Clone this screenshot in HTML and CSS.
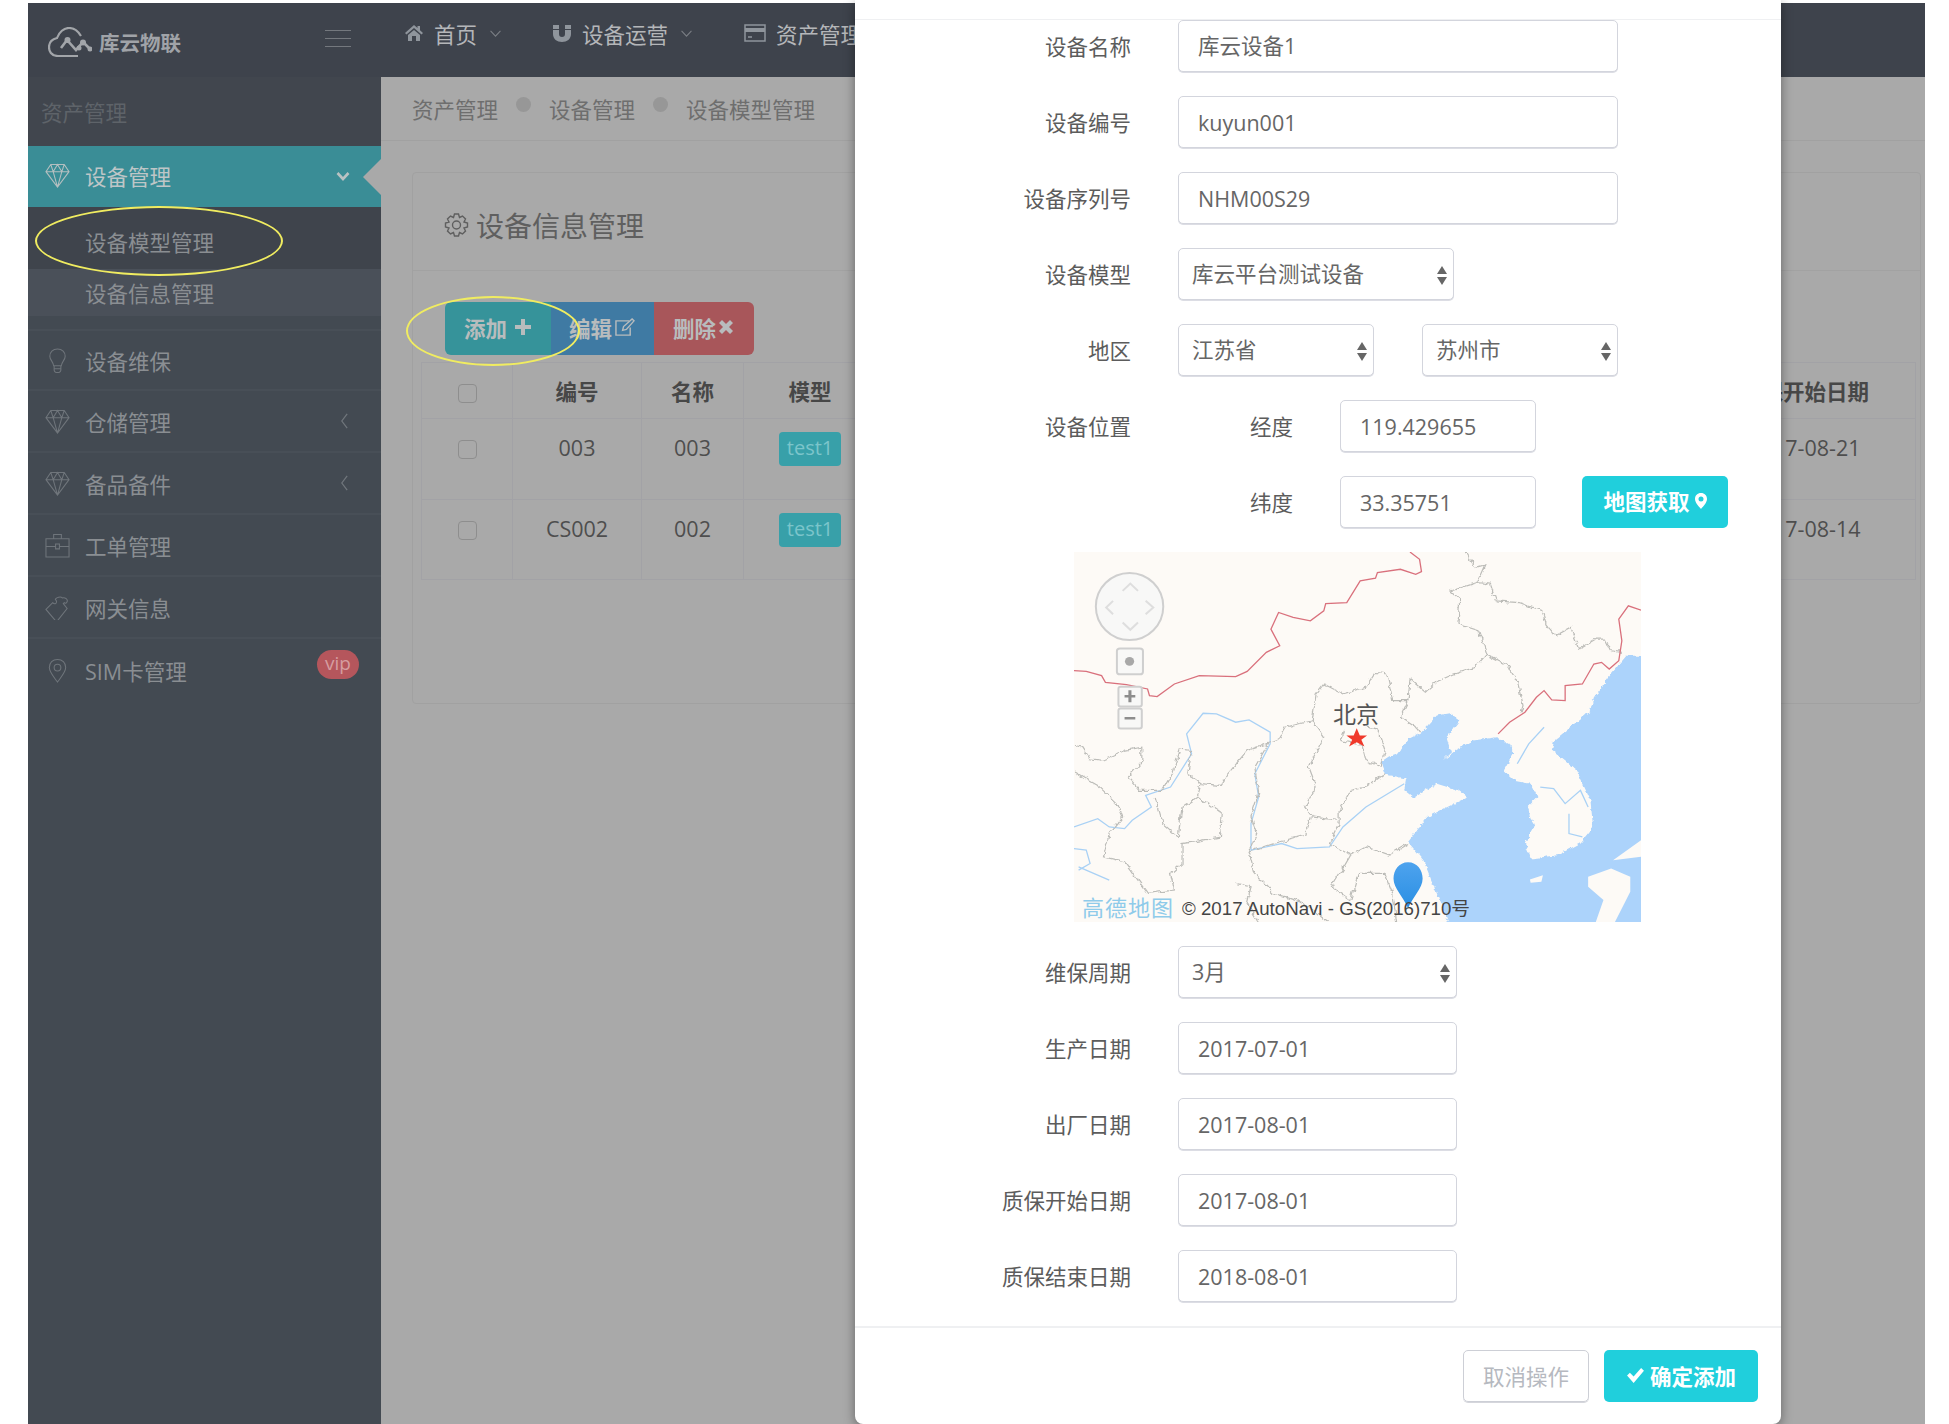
FILE: index.html
```html
<!DOCTYPE html>
<html lang="zh-CN">
<head>
<meta charset="utf-8">
<title>设备信息管理</title>
<link rel="stylesheet" href="styles.css">
</head>
<body>
<svg class="defs" width="0" height="0" aria-hidden="true">
  <symbol id="i-diamond" viewBox="0 0 26 26"><path d="M6 1.500H20L25 9 13 25 1 9ZM1 9H25M8.500 9 13 25 17.500 9M6 1.500 8.500 9 13 1.500 17.500 9 20 1.500"/></symbol>
  <symbol id="i-bulb" viewBox="0 0 20 26"><path d="M10 1C5 1 2 4.500 2 8.500c0 4 3.500 5.500 4 10h8c.5-4.500 4-6 4-10C18 4.500 15 1 10 1ZM6.500 18.500v4c0 2 1.500 3 3.500 3s3.500-1 3.500-3v-4M6.500 21.500h7"/></symbol>
  <symbol id="i-case" viewBox="0 0 26 26"><path d="M1 6H25V25H1ZM9 6V1.500H17V6M1 14H11M15 14H25M11 11.500H15V16.500H11Z"/></symbol>
  <symbol id="i-hand" viewBox="0 0 26 26"><path d="M1 15 8 8c2 2 4 1 4-1s-2-2-1-3 5-3 7-1c3-1 6 2 5 4-1 2-2 2-3 1l-1 1 4 5-11 14Z"/></symbol>
  <symbol id="i-pin" viewBox="0 0 20 26"><path d="M10 1.500C5 1.500 1.500 5 1.500 10c0 5 5 10 8.500 15 3.500-5 8.500-10 8.500-15 0-5-3.500-8.500-8.500-8.500Z"/><circle cx="10" cy="10" r="3.500"/></symbol>
  <symbol id="i-chev-d" viewBox="0 0 14 10"><path d="M1.500 2 7 8l5.500-6"/></symbol>
</svg>

<div class="app">
  <header class="topbar">
    <div class="brand">
      <svg class="logo" viewBox="0 0 44 30"><path d="M30 29H10C3 29 1 24 1 20 1 15 5 12 9 11 11 5 16 1 21 1 26 1 30 4 33 9"/><path class="logo-pulse" d="M13 21 19 13 28 23 35 15 42 22"/><circle cx="19.500" cy="13" r="3"/><circle cx="35" cy="15.500" r="3"/><circle cx="31" cy="21" r="2.500"/><circle cx="42" cy="22" r="2.500"/></svg>
      <span class="brand-name">库云物联</span>
      <span class="burger"><i></i><i></i><i></i></span>
    </div>
    <nav class="nav">
      <a class="nav-item">
        <svg class="nav-ico" viewBox="0 0 18 18"><path class="solid" d="M9 1 0 9l1.500 1.500L9 4l7.500 6.500L18 9l-3-2.700V2h-2.500v2ZM3 11l6-5 6 5v6h-4v-5H7v5H3Z"/></svg>
        <span>首页</span>
        <svg class="nav-chev" viewBox="0 0 14 10"><use href="#i-chev-d"/></svg>
      </a>
      <a class="nav-item">
        <svg class="nav-ico" viewBox="0 0 18 18"><path class="solid" d="M0 1h6v4H0ZM12 1h6v4h-6ZM0 6h6v4c0 2 1 3 3 3s3-1 3-3V6h6v4c0 5-4 8-9 8s-9-3-9-8Z"/></svg>
        <span>设备运营</span>
        <svg class="nav-chev" viewBox="0 0 14 10"><use href="#i-chev-d"/></svg>
      </a>
      <a class="nav-item">
        <svg class="nav-ico wide" viewBox="0 0 22 18"><path class="line" d="M1 1h20v16H1ZM4 13h4"/><path class="solid" d="M1 4h20v4H1Z"/></svg>
        <span>资产管理</span>
      </a>
    </nav>
  </header>

  <aside class="sidebar">
    <div class="side-title">资产管理</div>
    <a class="side-item active">
      <svg class="side-ico"><use href="#i-diamond"/></svg>
      <span>设备管理</span>
      <svg class="side-chev-d" viewBox="0 0 14 10"><use href="#i-chev-d"/></svg>
    </a>
    <a class="sub-item">设备模型管理</a>
    <a class="sub-item current">设备信息管理</a>
    <a class="side-item first">
      <svg class="side-ico"><use href="#i-bulb"/></svg>
      <span>设备维保</span>
    </a>
    <a class="side-item">
      <svg class="side-ico"><use href="#i-diamond"/></svg>
      <span>仓储管理</span>
      <svg class="side-chev-l" viewBox="0 0 10 18"><path d="M8 1 2 9l6 8"/></svg>
    </a>
    <a class="side-item">
      <svg class="side-ico"><use href="#i-diamond"/></svg>
      <span>备品备件</span>
      <svg class="side-chev-l" viewBox="0 0 10 18"><path d="M8 1 2 9l6 8"/></svg>
    </a>
    <a class="side-item">
      <svg class="side-ico"><use href="#i-case"/></svg>
      <span>工单管理</span>
    </a>
    <a class="side-item">
      <svg class="side-ico"><use href="#i-hand"/></svg>
      <span>网关信息</span>
    </a>
    <a class="side-item last">
      <svg class="side-ico"><use href="#i-pin"/></svg>
      <span>SIM卡管理</span>
      <em class="vip">vip</em>
    </a>
  </aside>

  <main class="main">
    <div class="crumbs">
      <span>资产管理</span><i class="dot"></i>
      <span>设备管理</span><i class="dot"></i>
      <span>设备模型管理</span>
    </div>
    <div class="content">
      <section class="card">
        <h2 class="card-title">
          <svg class="gear" viewBox="0 0 24 24"><circle cx="12" cy="12" r="4"/><path d="M10 1h4l1 3.500 3-1.500 3 3-1.500 3 3.500 1v4l-3.500 1 1.500 3-3 3-3-1.500-1 3.500h-4l-1-3.500-3 1.500-3-3 1.500-3-3.500-1v-4l3.500-1-1.500-3 3-3 3 1.500Z"/></svg>
          设备信息管理
        </h2>
        <div class="card-body">
          <div class="toolbar">
            <a class="tbtn teal">添加<svg class="tb-ico plus" viewBox="0 0 18 18"><path d="M7 1h4v6h6v4h-6v6H7v-6H1V7h6Z"/></svg></a>
            <a class="tbtn blue">编辑<svg class="tb-ico edit" viewBox="0 0 22 20"><path d="M16 3H2v15h15V10"/><path d="M9 13l1-4 9-8 2 2-8 9Z"/></svg></a>
            <a class="tbtn red">删除<svg class="tb-ico times" viewBox="0 0 14 14"><path d="M3 0l4 4 4-4 3 3-4 4 4 4-3 3-4-4-4 4-3-3 4-4-4-4Z"/></svg></a>
          </div>
          <table class="grid">
            <thead>
              <tr>
                <th class="c-check"><span class="check"></span></th>
                <th class="c-code">编号</th>
                <th class="c-name">名称</th>
                <th class="c-model">模型</th>
                <th></th>
                <th class="c-date">质保开始日期</th>
              </tr>
            </thead>
            <tbody>
              <tr class="r1">
                <td><span class="check"></span></td>
                <td>003</td>
                <td>003</td>
                <td><span class="tag">test1</span></td>
                <td></td>
                <td>2017-08-21</td>
              </tr>
              <tr class="r2">
                <td><span class="check"></span></td>
                <td>CS002</td>
                <td>002</td>
                <td><span class="tag">test1</span></td>
                <td></td>
                <td>2017-08-14</td>
              </tr>
            </tbody>
          </table>
        </div>
      </section>
    </div>
  </main>
</div>

<span class="ring ring-a"></span>
<span class="ring ring-b"></span>

<div class="modal">
  <div class="modal-top"></div>
  <div class="form">
    <div class="row"><label>设备名称</label><div class="field w-full cjk">库云设备1</div></div>
    <div class="row"><label>设备编号</label><div class="field w-full">kuyun001</div></div>
    <div class="row"><label>设备序列号</label><div class="field w-full">NHM00S29</div></div>
    <div class="row"><label>设备模型</label><div class="field select w-mid">库云平台测试设备</div></div>
    <div class="row"><label>地区</label><div class="pair"><div class="field select w-half">江苏省</div><div class="field select w-half">苏州市</div></div></div>
    <div class="row"><label>设备位置</label><span class="sub-label">经度</span><div class="field w-coord">119.429655</div></div>
    <div class="row"><label></label><span class="sub-label">纬度</span><div class="field w-coord">33.35751</div>
      <a class="btn-map">地图获取<svg class="map-pin" viewBox="0 0 12 16"><path fill-rule="evenodd" d="M6 0C2.500 0 0 2.500 0 6c0 3.500 3.500 7 6 10 2.500-3 6-6.500 6-10 0-3.500-2.500-6-6-6Zm0 3.500a2.500 2.500 0 1 1 0 5 2.500 2.500 0 0 1 0-5Z"/></svg></a>
    </div>

    <div class="map">
      <svg class="map-svg" viewBox="38 33 1480 1113" preserveAspectRatio="none">
        <defs>
          <linearGradient id="pinfill" x1="0" y1="0" x2="0" y2="1"><stop offset="0" stop-color="#4ea3ee"/><stop offset="1" stop-color="#2a8fe3"/></linearGradient>
          <filter id="rough" x="0" y="0" width="100%" height="100%"><feTurbulence type="fractalNoise" baseFrequency="0.06" numOctaves="2" seed="4"/><feDisplacementMap in="SourceGraphic" scale="16" xChannelSelector="R" yChannelSelector="G"/></filter>
          <filter id="coast" x="0" y="0" width="100%" height="100%"><feTurbulence type="fractalNoise" baseFrequency="0.08" numOctaves="2" seed="9"/><feDisplacementMap in="SourceGraphic" scale="14" xChannelSelector="R" yChannelSelector="G"/></filter>
        </defs>
        <rect x="38" y="33" width="1480" height="1113" fill="#fdfaf6"/>
        <path class="sea" filter="url(#coast)" d="M838 665 860 648 882 640 910 596 945 575 985 525 1020 518 1046 540 1010 590 1022 635 1000 660 1040 625 1080 600 1140 590 1175 610 1185 640 1160 690 1190 722 1230 730 1248 770 1222 800 1240 860 1215 910 1230 955 1300 945 1358 910 1393 860 1386 780 1350 690 1285 630 1292 600 1385 510 1395 470 1440 400 1480 345 1560 345 1560 1190 1030 1190 985 1060 950 960 910 905 960 830 1065 770 1040 750 985 730 925 772 900 750 905 715 850 702Z"/>
        <path class="isle" d="M1518 900 1445 960 1518 950ZM1380 1010 1440 985 1490 1010 1490 1055 1450 1146 1400 1146 1420 1080 1380 1040ZM1228 1018 1262 1005 1258 1025 1230 1028Z"/>
        <g class="river">
          <path d="M38 860 100 835 130 860 170 865 190 840 240 800 225 765 290 740 345 640 332 580 375 518 410 520 460 545 495 538 550 575 550 610 510 700 520 770 500 850 500 930 580 910 620 925 705 920 740 860 800 800 900 730"/>
          <path d="M38 925 70 930 80 970 50 990M50 980 130 1020"/>
          <path d="M1265 560 1225 610 1195 670"/>
          <path d="M1255 740 1290 745 1320 790 1360 750 1380 800M1330 820 1330 880 1365 890"/>
        </g>
        <g class="prov" filter="url(#rough)">
          <path d="M1060 33 1085 80 1110 72 1090 125 1125 130 1140 180 1200 185 1260 210 1270 250 1295 285 1335 260 1355 325 1400 295 1425 295 1440 330 1468 335"/>
          <path d="M1090 125 1022 150 1045 175 1040 250 1095 270 1115 340 1085 380 1030 400 990 420 955 455 915 415 910 480"/>
          <path d="M1115 340 1165 370 1195 420 1210 495 1205 515"/>
          <path d="M910 480 870 480 855 400 825 395 800 440 740 460 690 430 670 460 660 540 590 560 570 600 540 610 490 630 440 700 420 735 370 730 335 700 345 630 315 625 295 700 270 750 210 750 180 710 215 665 215 620 170 630 110 660 80 655 60 620 38 615"/>
          <path d="M910 480 890 530 930 560 940 575"/>
          <path d="M660 540 690 590 650 680 670 740 640 800 660 830 725 840"/>
          <path d="M545 610 510 680 520 760 500 830 515 880 495 935 560 910 640 885 655 830"/>
          <path d="M850 700 800 740 760 750 730 810 730 850 705 910 760 945 800 920 860 945 910 910"/>
          <path d="M745 570 735 600 790 615 800 660 840 680 850 630 830 565 800 560"/>
          <path d="M38 695 100 735 150 790 165 830 130 880 115 950 170 965 230 1060 300 1050 290 1000 320 970 320 910 350 905 420 890 425 820 390 790 360 770 370 730"/>
          <path d="M250 770 270 850 310 890 320 800 360 770"/>
          <path d="M495 935 510 1000 560 1060 640 1090 700 1146"/>
          <path d="M760 945 745 975 710 1040 760 1080 780 1000 850 1000 870 1060 880 1146"/>
          <path d="M460 1030 500 1040 490 1090 520 1146"/>
        </g>
        <g class="nation">
          <path d="M38 390 70 392 110 405 120 425 175 432 230 445 235 465 255 468 300 430 365 405 460 408 490 392 540 335 575 315 552 265 572 215 610 230 655 240 690 210 695 188 750 185 785 120 825 112 830 95 890 85 930 100 945 92 940 55 915 33"/>
          <path d="M1145 580 1175 545 1215 515 1245 470 1265 450 1285 478 1320 480 1320 435 1365 430 1395 370 1415 365 1435 385 1460 360 1468 300 1460 235 1485 195 1518 208"/>
        </g>
        <path class="star" d="M776 563 784 585 803 585 788 598 796 618 776 605 756 618 764 598 749 585 768 585Z"/>
        <path d="M910 966C886 966 872 990 872 1015 872 1045 898 1070 910 1105 922 1070 948 1045 948 1015 948 990 934 966 910 966Z" fill="url(#pinfill)"/>
        <ellipse class="ctl" cx="183" cy="197" rx="88" ry="101"/>
        <path class="ctl-arrow" d="M165 150 185 128 205 150M140 180 122 200 140 220M225 180 245 200 225 220M165 245 185 267 205 245"/>
        <rect class="ctl" x="150" y="323" width="68" height="78" rx="8"/>
        <ellipse cx="183" cy="362" rx="12" ry="13" fill="#a8a8a8"/>
        <rect class="ctl" x="154" y="438" width="61" height="60" rx="6"/>
        <rect class="ctl" x="154" y="504" width="61" height="60" rx="6"/>
        <path d="M170 463h10v-14h8v14h10v8h-10v14h-8v-14h-10ZM170 529h28v8h-28Z" fill="#8d8d8d"/>
      </svg>
      <span class="map-city">北京</span>
      <span class="map-brand">高德地图</span>
      <span class="map-copy">© 2017 AutoNavi - GS(2016)710号</span>
    </div>

    <div class="row"><label>维保周期</label><div class="field select w-date">3月</div></div>
    <div class="row"><label>生产日期</label><div class="field w-date">2017-07-01</div></div>
    <div class="row"><label>出厂日期</label><div class="field w-date">2017-08-01</div></div>
    <div class="row"><label>质保开始日期</label><div class="field w-date">2017-08-01</div></div>
    <div class="row"><label>质保结束日期</label><div class="field w-date">2018-08-01</div></div>
  </div>
  <div class="modal-foot">
    <a class="btn-cancel">取消操作</a>
    <a class="btn-ok"><svg class="ok-ico" viewBox="0 0 20 16"><path d="M1 8l3-3 4 4 8-9 3 3-11 13Z"/></svg>确定添加</a>
  </div>
</div>
</body>
</html>
```

FILE: styles.css
```css
* { box-sizing: border-box; }
html, body { margin: 0; height: 1424px; overflow: hidden; background: #fff; }
body {
  position: relative;
  font-family: "Open Sans", "Noto Sans CJK SC", sans-serif;
  font-size: 21.5px;
  color: #666;
}
.defs { position: absolute; }

.app {
  margin: 3px 24px 0 28px;
  height: 1421px;
  display: grid;
  grid-template-columns: 353px 1fr;
  grid-template-rows: 74px 1fr;
  overflow: hidden;
  background: #a9a9a9;
}

/* top bar */
.topbar { grid-column: 1 / 3; display: flex; background: #3e434c; }
.brand { width: 355px; flex: none; display: flex; align-items: center; padding: 4px 0 0 20px; }
.logo { width: 44px; height: 30px; flex: none; fill: #a2a5a9; stroke: none; }
.logo path { fill: none; stroke: #a2a5a9; stroke-width: 2.200; }
.logo .logo-pulse { stroke-width: 2.600; }
.brand-name { margin-left: 7px; font-weight: 700; font-size: 20.5px; color: #a0a3a8; }
.burger { margin-left: 144px; margin-top: -8px; width: 26px; display: flex; flex-direction: column; gap: 7px; }
.burger i { height: 1px; background: #74787e; display: block; }
.nav { display: flex; align-items: center; padding: 0 0 14px 22px; gap: 51px; }
.nav-item { display: flex; align-items: center; color: #b4b6b9; white-space: nowrap; }
.nav-ico { width: 18px; height: 18px; margin-right: 11px; }
.nav-ico.wide { width: 22px; margin-right: 10px; }
.nav-ico .solid { fill: #8f959c; }
.nav-ico .line { fill: none; stroke: #8f959c; stroke-width: 1.500; }
.nav-chev { width: 13px; height: 9px; margin-left: 12px; fill: none; stroke: #7a7e84; stroke-width: 1.200; }

/* sidebar */
.sidebar { background: #434a52; display: flex; flex-direction: column; }
.side-title { height: 69px; display: flex; align-items: center; padding: 0 0 1px 13px; background: #41464e; color: #5e6369; }
.side-item {
  position: relative;
  height: 62px;
  display: flex;
  align-items: center;
  padding-left: 17px;
  color: #8a8e92;
  border-bottom: 2px solid #484f57;
}
.side-item.first { margin-top: 13px; border-top: 2px solid #484f57; }
.side-item.last { border-bottom: 0; }
.side-ico { width: 25px; height: 25px; margin-right: 15px; fill: none; stroke: #6f757b; stroke-width: 1.100; flex: none; }
.side-item.active { height: 61px; padding-bottom: 2px; background: #3a8d96; color: #bec6c7; border: 0; }
.side-item.active .side-ico { stroke: #b4bfc0; }
.side-item.active::after {
  content: "";
  position: absolute;
  right: 0;
  top: 13px;
  border-style: solid;
  border-width: 18px 18px 18px 0;
  border-color: transparent #a9a9a9 transparent transparent;
}
.side-chev-d { width: 14px; height: 10px; margin-left: auto; margin-right: 31px; fill: none; stroke: #b9c2c3; stroke-width: 2.600; }
.side-chev-l { width: 9px; height: 16px; margin-left: auto; margin-right: 32px; fill: none; stroke: #70767c; stroke-width: 1.400; }
.sub-item { height: 62px; display: flex; align-items: center; padding: 6px 0 0 57px; background: #3f444c; color: #8a8e92; }
.sub-item.current { height: 47px; padding-top: 0; background: #4a5059; }
.vip {
  margin-left: auto;
  margin-right: 22px;
  margin-top: -12px;
  width: 42px;
  height: 29px;
  border-radius: 15px;
  background: #b5565c;
  color: #d59ea1;
  font-style: normal;
  font-size: 19px;
  line-height: 26px;
  text-align: center;
}

/* main */
.main { min-width: 0; display: flex; flex-direction: column; }
.crumbs { height: 64px; flex: none; display: flex; align-items: center; padding: 0 0 0 31px; border-bottom: 1px solid #a1a1a1; color: #6e6e6e; }
.dot { width: 15px; height: 15px; border-radius: 50%; background: #979797; margin: -8px 18px 0 18px; }
.content { padding: 31px 4px 0 31px; }
.card { height: 532px; border: 1px solid #a1a1a1; border-radius: 4px; }
.card-title { margin: 0; height: 98px; display: flex; align-items: center; padding: 6px 0 0 31px; border-bottom: 1px solid #a2a2a2; font-size: 28px; font-weight: 400; color: #5f5f5f; }
.gear { width: 25px; height: 24px; margin-right: 7px; fill: none; stroke: #5f5f5f; stroke-width: 1.400; }
.card-body { padding: 31px 4px 0 8px; }
.toolbar { display: flex; margin-left: 24px; height: 53px; }
.tbtn { display: flex; align-items: center; padding-bottom: 3px; font-weight: 700; color: #b8bcbd; }
.teal { width: 106px; background: #36939a; border-radius: 6px 0 0 6px; padding-left: 19px; }
.blue { width: 103px; background: #3f7aa3; padding-left: 18px; }
.red { width: 100px; background: #a8565a; border-radius: 0 6px 6px 0; padding-left: 19px; }
.tb-ico { margin-left: 5px; fill: #b8bcbd; }
.plus { width: 18px; height: 18px; margin-left: 7px; }
.edit { width: 21px; height: 19px; margin-left: 2px; fill: none; stroke: #b8bcbd; stroke-width: 1.500; }
.times { width: 14px; height: 14px; margin-left: 3px; }

.grid { margin-top: 7px; width: 100%; table-layout: fixed; border-collapse: collapse; }
.grid th, .grid td { border: 1px solid #a2a2a6; text-align: center; padding: 0; }
.grid th { height: 56px; font-weight: 700; color: #474747; }
.grid td { vertical-align: top; color: #4e4e4e; padding-top: 14px; line-height: 30px; }
.r1 td { height: 81px; }
.r2 td { height: 80px; }
.c-check { width: 91px; }
.c-code { width: 129px; }
.c-name { width: 102px; }
.c-model { width: 133px; }
.c-date { width: 222px; }
.check { display: inline-block; width: 19px; height: 19px; border: 1px solid #8e8e8e; border-radius: 4px; vertical-align: middle; }
.grid td .check { margin-top: -1px; }
.tag { display: inline-block; width: 62px; height: 34px; line-height: 32px; border-radius: 4px; background: #38a0a9; color: #7cc5cb; font-size: 20px; vertical-align: top; margin-top: -1px; }

/* yellow annotation rings */
.ring { position: absolute; border: 2px solid #f0ec60; border-radius: 50%; }
.ring-a { left: 35px; top: 206px; width: 248px; height: 70px; }
.ring-b { left: 406px; top: 296px; width: 174px; height: 70px; }

/* modal */
.modal {
  position: absolute;
  left: 855px;
  top: 0;
  width: 926px;
  height: 1424px;
  background: #fff;
  border-radius: 0 0 8px 8px;
  box-shadow: 0 3px 12px rgba(0, 0, 0, .4);
  display: flex;
  flex-direction: column;
}
.modal-top { height: 20px; flex: none; border-bottom: 1px solid #eff0f2; }
.form { flex: none; height: 1306px; }
.row { height: 52px; margin-bottom: 24px; display: flex; align-items: stretch; }
.row label { width: 276px; flex: none; margin-right: 47px; display: flex; align-items: center; justify-content: flex-end; color: #5c5c5c; padding-bottom: 1px; }
.field {
  height: 52px;
  display: flex;
  align-items: center;
  padding: 0 19px;
  border: 1px solid #d3d5dd;
  border-radius: 5px;
  box-shadow: 0 1px 0 #dcdde4;
  color: #666;
  background: #fff;
}
.field.cjk { padding-bottom: 4px; }
.select { position: relative; padding: 0 13px 4px; }
.select::before, .select::after {
  content: "";
  position: absolute;
  right: 6px;
  border-left: 5px solid transparent;
  border-right: 5px solid transparent;
}
.select::before { top: 17px; border-bottom: 8px solid #666; }
.select::after { top: 28px; border-top: 8px solid #666; }
.w-full { width: 440px; }
.w-mid { width: 276px; }
.w-half { width: 196px; }
.w-coord { width: 196px; }
.w-date { width: 279px; }
.pair { display: flex; gap: 48px; }
.sub-label { width: 115px; margin-right: 47px; display: flex; align-items: center; justify-content: flex-end; color: #5c5c5c; padding-bottom: 1px; }
.btn-map {
  margin-left: 46px;
  width: 146px;
  height: 52px;
  display: flex;
  align-items: center;
  justify-content: center;
  padding-bottom: 3px;
  background: #20cfdc;
  border-radius: 5px;
  color: #fff;
  font-weight: 700;
}
.map-pin { width: 12px; height: 16px; margin-left: 5px; fill: #fff; }

.map { position: relative; margin: 0 0 24px 219px; width: 567px; height: 370px; overflow: hidden; }
.map-svg { display: block; width: 100%; height: 100%; }
.map-svg path, .map-svg ellipse, .map-svg rect { vector-effect: non-scaling-stroke; }
.sea { fill: #acd3fb; }
.isle { fill: #fdfaf6; }
.river path { fill: none; stroke: #a9d1f5; stroke-width: 1.300; }
.prov path { fill: none; stroke: #bcbcb8; stroke-width: 1.200; }
.nation path { fill: none; stroke: #d9707c; stroke-width: 1.300; }
.star { fill: #f0392b; }
.ctl { fill: #f8f8f7; stroke: #cfcfcf; stroke-width: 2; }
.ctl-arrow { fill: none; stroke: #dedede; stroke-width: 2; }
.map-city { position: absolute; left: 259px; top: 147px; font-size: 23px; line-height: 30px; color: #555; }
.map-brand { position: absolute; left: 8px; top: 342px; font-size: 22px; line-height: 26px; color: #8fcbea; letter-spacing: 1px; }
.map-copy { position: absolute; left: 108px; top: 346px; font-family: "Liberation Sans", "Noto Sans CJK SC", sans-serif; font-size: 18.700px; line-height: 22px; color: #444; white-space: nowrap; }

.modal-foot { flex: 1; border-top: 2px solid #eff0f2; display: flex; justify-content: flex-end; align-items: flex-start; gap: 15px; padding: 22px 23px 0 0; }
.btn-cancel {
  width: 126px;
  height: 52px;
  display: flex;
  align-items: center;
  justify-content: center;
  padding-bottom: 2px;
  border: 1px solid #cdcfd6;
  border-radius: 5px;
  box-shadow: 0 1px 0 #d5d6dc;
  color: #b6b9c0;
}
.btn-ok {
  width: 154px;
  height: 52px;
  display: flex;
  align-items: center;
  justify-content: center;
  padding-bottom: 2px;
  background: #20cfdc;
  border-radius: 5px;
  color: #fff;
  font-weight: 700;
}
.ok-ico { width: 19px; height: 15px; margin-right: 5px; fill: #fff; }
```
